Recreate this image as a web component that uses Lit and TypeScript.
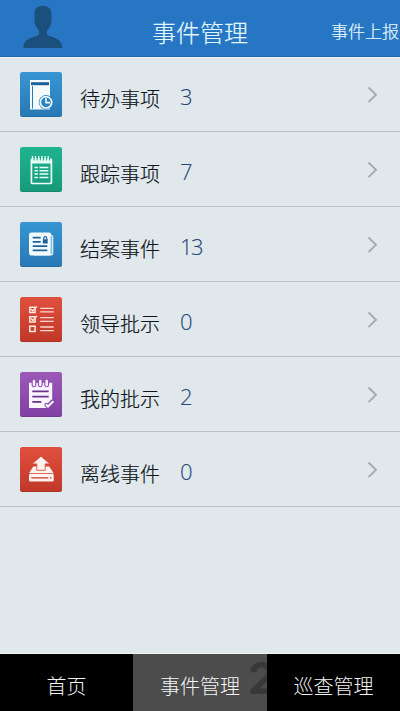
import { LitElement, html, svg, css } from "lit";
import { customElement } from "lit/decorators.js";

const icons = {
  todo: svg`
    <path fill="#f4fafc" d="M10 8h20v29.5H10z"/>
    <path fill="#1d5f98" d="M11 10.2h18v3H11z"/>
    <path stroke="#2c78b4" stroke-width="1" d="M12.5 14v22.5"/>
    <circle cx="26" cy="30.3" r="7.2" fill="#2d83bf"/>
    <circle cx="26" cy="30.3" r="5.7" fill="#2d83bf" stroke="#eef8fb" stroke-width="1.7"/>
    <path fill="none" stroke="#eef8fb" stroke-width="1.6" d="M26 26v4.6h4"/>`,
  track: svg`
    <rect x="11.4" y="12" width="20" height="24.5" rx="1" fill="none" stroke="#e9fff6" stroke-width="1.7"/>
    <path fill="#e9fff6" d="M11 12.5h21v4H11z"/>
    <path stroke="#16a07e" stroke-width="1" d="M14 10v3.5M17.1 10v3.5M20.3 10v3.5M23.5 10v3.5M26.7 10v3.5M29.5 10v3.5"/>
    <path stroke="#e9fff6" stroke-width="1.3" d="M12.5 9v5M15.5 9v5M18.7 9v5M21.9 9v5M25.1 9v5M28.2 9v5"/>
    <path stroke="#e9fff6" stroke-width="1.5" d="M14.5 20.5h3.4M19.5 20.5h8.9M14.5 23.7h3.4M19.5 23.7h8.9M14.5 27h3.4M19.5 27h8.9M14.5 30.4h3.4M19.5 30.4h8.9"/>`,
  closed: svg`
    <path fill="#d3edf7" d="M29 13h2.6q1.7 0 1.7 2v16q0 2.5-2.3 2.5H14z"/>
    <rect x="9" y="10.5" width="22.3" height="23" rx="2.4" fill="#f4fafc"/>
    <path stroke="#2d83bf" stroke-width=".7" d="M31.2 14v18"/>
    <path stroke="#20649d" stroke-width="1.8" d="M12.7 15.7h8M12.7 19.9h8M12.7 24.2h14.6M12.7 28.4h14.6"/>
    <path fill="#20649d" d="M22.8 17.3h4.9v4.2h-4.9z"/>
    <path fill="none" stroke="#20649d" stroke-width="1.2" d="M23.8 18v-1.6q0-1.7 1.5-1.7t1.5 1.7V18"/>`,
  leader: svg`
    <path fill="none" stroke="#ffe9e1" stroke-width="1.5" d="M9.8 10.3h5.3v5.3H9.8zM9.8 19.8h5.3v5.3H9.8zM9.8 29.2h5.3v5.3H9.8z"/>
    <path fill="none" stroke="#ffe9e1" stroke-width="1.3" d="M11.2 12l1.6 2 4.2-4.6M11.2 21.5l1.6 2 4.2-4.6"/>
    <path stroke="#ffd9cf" stroke-width="1.3" d="M20.2 11.3h13.5M20.2 14.9h13.5M20.2 20.6h13.5M20.2 24.4h13.5M20.2 30h13.5M20.2 33.7h13.5"/>`,
  mine: svg`
    <path fill="#fbf4ff" d="M9 10.8h23.2v20L27 36H9z"/>
    <path fill="#8f4bb1" d="M11.6 9.5h4.8v3q0 2.8-2.4 2.8t-2.4-2.8zM17.9 9.5h4.8v3q0 2.8-2.4 2.8t-2.4-2.8zM24.3 9.5h4.8v3q0 2.8-2.4 2.8t-2.4-2.8z"/>
    <path stroke="#fbf4ff" stroke-width="2.5" stroke-linecap="round" d="M14 9v4M20.3 9v4M26.7 9v4"/>
    <path stroke="#65358a" stroke-width="1.8" d="M12.3 19.4h16.4M12.3 24.6h16.4M12.3 29.8h9"/>
    <path fill="none" stroke="#8443a5" stroke-width="4.2" stroke-linecap="round" d="M26.5 33l1.5 1.3 4.3-4.5"/>
    <path fill="none" stroke="#fbf4ff" stroke-width="2.2" stroke-linecap="round" d="M26.5 33l1.5 1.5 4.8-4.7"/>`,
  offline: svg`
    <path fill="#fff1ed" d="M13.3 19.5h15.9l4.5 6.7H9z"/>
    <path fill="#fff1ed" stroke="#cf4537" stroke-width=".8" d="M21 9.2l8.9 7.7h-4.7v6.4h-8.4v-6.4h-4.7z"/>
    <rect x="9" y="27" width="24.7" height="7.5" rx="1" fill="#fff1ed"/>
    <path stroke="#c33d2f" stroke-width="1.2" d="M11.3 30.9h17M30 30.9h1.5"/>`,
};

const rows = [
  { label: "待办事项", count: 3, tone: "blue", icon: icons.todo },
  { label: "跟踪事项", count: 7, tone: "green", icon: icons.track },
  { label: "结案事件", count: 13, tone: "blue", icon: icons.closed },
  { label: "领导批示", count: 0, tone: "red", icon: icons.leader },
  { label: "我的批示", count: 2, tone: "purple", icon: icons.mine },
  { label: "离线事件", count: 0, tone: "red", icon: icons.offline },
];

@customElement("app-root")
export class AppRoot extends LitElement {
  static styles = css`
    :host {
      display: flex;
      flex-direction: column;
      height: 711px;
      width: 400px;
      overflow: hidden;
      background: #e0e8ec;
      font-family: "Noto Sans CJK SC", sans-serif;
      font-weight: 300;
    }
    header {
      box-sizing: border-box;
      flex: none;
      height: 57px;
      display: grid;
      grid-template-columns: 130px 1fr 130px;
      background: #2776c3;
      border-bottom: 1px solid #2468ac;
      color: #e2f6fb;
      white-space: nowrap;
    }
    .avatar { display: block; margin: 5px 0 0 23px; }
    .title { margin: 0; text-align: center; font-size: 24px; line-height: 35px; padding-top: 14px; font-weight: 300; -webkit-text-stroke: 0.2px #e2f6fb; }
    .report { text-align: right; font-size: 17px; line-height: 25px; padding: 18px 1px 0 0; -webkit-text-stroke: 0.2px #e2f6fb; }
    ul { list-style: none; margin: 0; padding: 0; flex: 1; box-shadow: inset 0 1px #eef4f6, inset 0 -1px #f2f6f7; }
    li {
      box-sizing: border-box;
      height: 75px;
      display: flex;
      align-items: center;
      padding: 1px 22px 0 20px;
      border-bottom: 1px solid #b9c2c7;
    }
    .tile { width: 42px; height: 45px; border-radius: 2.5px; flex: none; box-shadow: inset 0 -1px rgba(0, 0, 0, 0.1); }
    .tile svg { display: block; }
    .blue { background: linear-gradient(#3796d3, #2878b5); }
    .green { background: linear-gradient(#20b491, #16997a); }
    .red { background: linear-gradient(#e04f3e, #c03829); }
    .purple { background: linear-gradient(#9b59b8, #8140a3); }
    .label { width: 80px; margin: 8px 20px 0 18px; font-size: 20px; line-height: 30px; color: #11171d; white-space: nowrap; font-weight: 300; -webkit-text-stroke: 0.2px #11171d; }
    .count { flex: 1; margin-top: 3px; font: 300 22px/30px "Open Sans", sans-serif; letter-spacing: -1.5px; color: #28487a; -webkit-text-stroke: 0.15px #28487a; }
    .chevron { flex: none; }
    nav { flex: none; display: grid; grid-template-columns: 133px 134px 133px; height: 57px; background: #000; color: #f4f4f4; }
    .tab { position: relative; overflow: hidden; text-align: center; font-size: 20px; line-height: 30px; padding-top: 17px; }
    .active { background: #4c4c4c; }
    .mark { position: absolute; left: 115px; top: 2px; font: 700 44px/44px Inter, sans-serif; color: #383838; }
    .name { position: relative; }
  `;

  render() {
    return html`
      <header>
        <svg class="avatar" width="40" height="43" viewBox="0 0 40 43">
          <path fill="#1a4f7e" d="M11.5 9C11.5 3.5 14 1 19.6 1S28.5 3.5 28.5 9v6c0 5-2 8-4.5 10.5v3.2c0 1 .6 1.5 2 2C34 33.5 39 35 39.3 43H.4C.7 35 5 33.5 14 30.7c1.4-.5 2-1 2-2v-3.2C13.5 23 11.5 20 11.5 15z"/>
        </svg>
        <h1 class="title">事件管理</h1>
        <div class="report">事件上报</div>
      </header>
      <ul>
        ${rows.map((r) => html`
          <li>
            <div class="tile ${r.tone}"><svg width="42" height="45" viewBox="0 0 42 45">${r.icon}</svg></div>
            <span class="label">${r.label}</span>
            <span class="count">${r.count}</span>
            <svg class="chevron" width="11" height="17" viewBox="0 0 11 17"><path d="M1.5 1.5l7.5 7.3-7.5 7.3" fill="none" stroke="#a8acaf" stroke-width="2"/></svg>
          </li>`)}
      </ul>
      <nav>
        <div class="tab"><span class="name">首页</span></div>
        <div class="tab active"><span class="mark">2</span><span class="name">事件管理</span></div>
        <div class="tab"><span class="name">巡查管理</span></div>
      </nav>
    `;
  }
}
